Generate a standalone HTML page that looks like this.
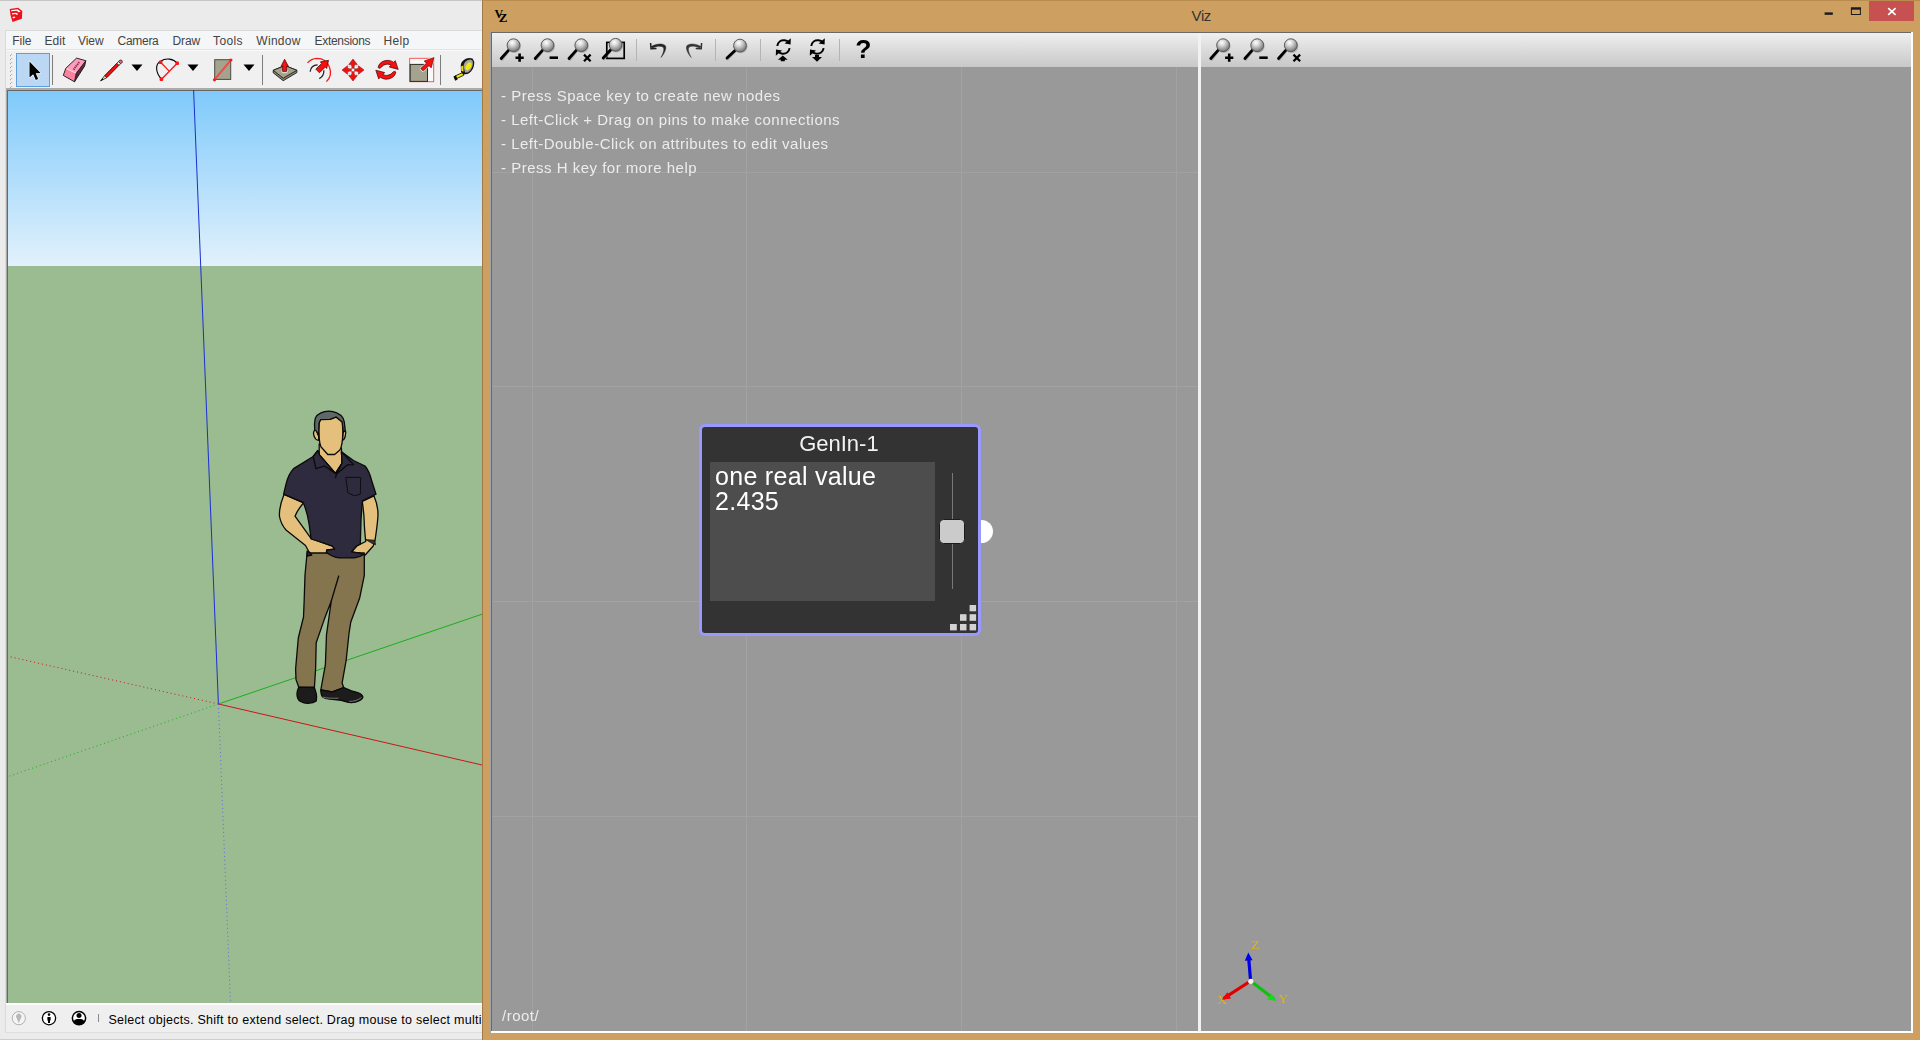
<!DOCTYPE html>
<html>
<head>
<meta charset="utf-8">
<title>Viz</title>
<style>
html,body{margin:0;padding:0;}
body{width:1920px;height:1040px;overflow:hidden;position:relative;background:#ebebeb;font-family:"Liberation Sans",sans-serif;}
.abs{position:absolute;}
/* ---------- SketchUp window ---------- */
#su{left:0;top:0;width:482px;height:1040px;background:#ebebeb;overflow:hidden;}
#su-top{left:0;top:0;width:482px;height:1px;background:#c6c6c6;}
#su-menu{left:6px;top:31px;width:476px;height:18px;background:#f5f6f7;}
#su-menu span{position:absolute;top:3px;font-size:12px;line-height:14px;color:#444;white-space:nowrap;}
#su-tool{left:6px;top:51px;width:476px;height:38px;background:#f0f0f0;}
#su-view{left:6px;top:88px;width:476px;height:915px;background:#6a6663;border-left:1px solid #ababab;border-top:2px solid #ababab;box-sizing:border-box;overflow:hidden;}
#su-client{left:5px;top:30px;width:477px;height:1003px;box-sizing:border-box;border-left:1px solid #dadada;border-top:1px solid #dadada;}
#su-msep{left:6px;top:49px;width:476px;height:2px;background:#fafafa;border-top:1px solid #e3e3e3;box-sizing:border-box;}
#su-status{left:6px;top:1003px;width:476px;height:30px;background:#efefef;box-sizing:border-box;border-top:2px solid #fdfdfd;border-bottom:1px solid #dedede;}
#su-status .txt{position:absolute;left:102.5px;top:8.3px;font-size:12.5px;line-height:14px;color:#000;white-space:nowrap;letter-spacing:0.265px;}
#su-bottom{left:0;top:1039px;width:482px;height:1px;background:#cdcdcd;}
/* ---------- Viz window ---------- */
#viz{left:482px;top:0;width:1438px;height:1040px;background:#cda062;border-left:1px solid #9f7b49;border-top:1px solid #b98c4e;box-sizing:border-box;}
#viz-title{left:708.6px;top:6px;font-size:15px;color:#33332f;letter-spacing:-0.4px;}
#viz-inner{left:490px;top:31px;width:1423px;height:1002px;background:#fdfdfd;box-sizing:border-box;border-left:1px solid #a2a4a6;border-top:1px solid #a2a4a6;}
#viz-inner2{left:491px;top:32px;width:1420px;height:999px;background:#f2f2f2;box-sizing:border-box;border-left:1px solid #696969;border-top:1px solid #696969;}
.tb{top:33px;height:34px;background:linear-gradient(#f0f0f0,#e3e3e3 30%,#c8c8c8);}
.canvas{top:67px;height:964px;background:#999;overflow:hidden;}
.gl{background:#a2a2a2;}
.help,#ntitle,#ntext,#rootlbl{will-change:transform;}
.help{position:absolute;left:9.4px;font-size:15px;line-height:17px;color:#ececec;white-space:nowrap;letter-spacing:0.5px;}
</style>
</head>
<body>
<!-- SketchUp -->
<div id="su" class="abs">
  <div id="su-top" class="abs"></div>
  <div id="su-client" class="abs"></div>
  <div id="su-menu" class="abs">
    <span style="left:6.2px;letter-spacing:0px">File</span><span style="left:38.4px;letter-spacing:0.1px">Edit</span><span style="left:72.1px;letter-spacing:-0.1px">View</span><span style="left:111.6px;letter-spacing:-0.3px">Camera</span><span style="left:166.6px;letter-spacing:-0.15px">Draw</span><span style="left:207.1px;letter-spacing:0.35px">Tools</span><span style="left:250.3px;letter-spacing:0.3px">Window</span><span style="left:308.5px;letter-spacing:-0.3px">Extensions</span><span style="left:377.5px;letter-spacing:0.35px">Help</span>
  </div>
  <div id="su-tool" class="abs"></div>
  <div id="su-msep" class="abs"></div>
<svg class="abs" style="left:6px;top:51px" width="476" height="38" viewBox="6 51 476 38">
  <!-- grip -->
  <g fill="#a6a6a6"><rect x="10" y="55" width="1.2" height="1.2"/><rect x="10" y="59" width="1.2" height="1.2"/><rect x="10" y="63" width="1.2" height="1.2"/><rect x="10" y="67" width="1.2" height="1.2"/><rect x="10" y="71" width="1.2" height="1.2"/><rect x="10" y="75" width="1.2" height="1.2"/><rect x="10" y="79" width="1.2" height="1.2"/><rect x="10" y="83" width="1.2" height="1.2"/><rect x="10" y="87" width="1.2" height="1.2"/></g>
  <g fill="#b8b8b8"><rect x="11" y="54" width="1.2" height="1.2"/><rect x="11" y="58" width="1.2" height="1.2"/><rect x="11" y="62" width="1.2" height="1.2"/><rect x="11" y="66" width="1.2" height="1.2"/><rect x="11" y="70" width="1.2" height="1.2"/><rect x="11" y="74" width="1.2" height="1.2"/><rect x="11" y="78" width="1.2" height="1.2"/><rect x="11" y="82" width="1.2" height="1.2"/><rect x="11" y="86" width="1.2" height="1.2"/></g>
  <g fill="#ffffff"><rect x="11.2" y="55.2" width="1" height="1"/><rect x="11.2" y="59.2" width="1" height="1"/><rect x="11.2" y="63.2" width="1" height="1"/><rect x="11.2" y="67.2" width="1" height="1"/><rect x="11.2" y="71.2" width="1" height="1"/><rect x="11.2" y="75.2" width="1" height="1"/><rect x="11.2" y="79.2" width="1" height="1"/><rect x="11.2" y="83.2" width="1" height="1"/><rect x="11.2" y="87.2" width="1" height="1"/></g>
  <!-- selected button -->
  <rect x="16.5" y="53.5" width="33" height="33" fill="#bcd7f3" stroke="#5b9fe0" stroke-width="1"/>
  <!-- cursor -->
  <path d="M29.5 61.5 L29.5 77.5 L33.2 74.2 L35.8 80 L38.2 78.9 L35.7 73.3 L40.6 73 Z" fill="#000" stroke="#fff" stroke-width="1.2" stroke-linejoin="round" paint-order="stroke"/>
  <!-- separators -->
  <rect x="52" y="55" width="1" height="30" fill="#7d7d7d"/>
  <rect x="262" y="55" width="1" height="30" fill="#7d7d7d"/>
  <rect x="440" y="55" width="1" height="30" fill="#7d7d7d"/>
  <!-- eraser -->
  <path d="M76.2 73.3 L85.8 60.7 L84.6 66.1 L74.5 81.8 Z" fill="#5a2a3a"/>
  <path d="M65.85 68.2 L76.6 58.1 L85.8 60.7 L76.2 73.3 Z" fill="#ff9dba"/>
  <path d="M65.85 68.2 L76.2 73.3 L74.5 81.8 L63.3 75.4 Z" fill="#f9829f"/>
  <path d="M66.4 68.6 L76 73.3" stroke="#ffe6ee" stroke-width="0.8"/>
  <path d="M65.85 68.2 L76.6 58.1 L85.8 60.7 L84.6 66.1 L74.5 81.8 L63.3 75.4 Z M76.2 73.3 L74.5 81.8 M76.2 73.3 L85.8 60.7" fill="none" stroke="#1a1216" stroke-width="0.9" stroke-linejoin="round"/>
  <path d="M73.6 69.6 L79.6 61.6" stroke="#8a3050" stroke-width="2" stroke-dasharray="1.3 0.7"/>
  <!-- pencil -->
  <g stroke-linejoin="round">
    <path d="M104.7 75.6 L116.9 63.2 L119 65.3 L106.8 77.7 Z" fill="#f01010" stroke="#2a0a0a" stroke-width="0.9"/>
    <path d="M116.9 63.2 L118.5 61.6 L120.6 63.7 L119 65.3 Z" fill="#f4f4f4" stroke="#2a2a2a" stroke-width="0.8"/>
    <path d="M118.5 61.6 C 119.2 60, 121.2 59.6, 122 60.6 C 122.8 61.6, 122.2 63.2, 120.6 63.7 Z" fill="#e06a78" stroke="#3a1a1a" stroke-width="0.8"/>
    <path d="M104.7 75.6 L106.8 77.7 L100.5 80.9 Z" fill="#e6dfa2" stroke="#1a1a10" stroke-width="0.8"/>
    <path d="M102.6 78.2 L103.3 79.5 L100.5 80.9 Z" fill="#000"/>
  </g>
  <!-- dropdown arrows -->
  <path d="M131.5 64.5 L142.5 64.5 L137 71 Z" fill="#000"/>
  <path d="M187.5 64.5 L198.5 64.5 L193 71 Z" fill="#000"/>
  <path d="M243.5 64.5 L254.5 64.5 L249 71 Z" fill="#000"/>
  <!-- arc -->
  <path d="M161.5 79.2 C 154.8 72, 155.5 63.5, 160.6 61.2 C 166 57.6, 173.5 58.6, 177.2 63.2" fill="none" stroke="#000" stroke-width="1.1"/>
  <path d="M161.5 79.2 L177.2 63.2 M168.9 70.9 L160.6 62.3" stroke="#f81818" stroke-width="1.3" fill="none"/>
  <rect x="159.6" y="77.4" width="3.6" height="3.6" rx="1" fill="#f81818"/><rect x="175.4" y="61.4" width="3.6" height="3.6" rx="1" fill="#f81818"/><rect x="158.8" y="60.5" width="3.6" height="3.6" rx="1" fill="#f81818"/>
  <!-- rectangle -->
  <rect x="214.7" y="59.7" width="16" height="19.7" fill="#a5a38d" stroke="#4c4b3e" stroke-width="1"/>
  <path d="M214.5 79.8 L230.9 60" stroke="#f81818" stroke-width="1.5"/>
  <path d="M214.5 79.8 L230.9 60" stroke="#ffc8c8" stroke-width="0.4"/>
  <circle cx="214.5" cy="79.8" r="1.6" fill="#f81818"/><circle cx="230.9" cy="60" r="1.6" fill="#f81818"/>
  <!-- push/pull -->
  <g stroke="#1c1c16" stroke-width="0.9" stroke-linejoin="round">
    <path d="M273.2 70.3 L284.9 65.6 L296.9 70.3 L296.9 72.6 L283.2 80.7 L273.2 72.8 Z" fill="#87866f"/>
    <path d="M273.2 70.3 L284.9 65.6 L296.9 70.3 L283.2 78.2 Z" fill="#a5a38d"/>
  </g>
  <ellipse cx="284.6" cy="71.4" rx="3.4" ry="1.8" fill="#d8d8cc"/>
  <path d="M282.6 71.4 L282.6 66.3 L281 66.3 L284.6 59.2 L288.4 66.3 L286.6 66.3 L286.6 71.4 Z" fill="#f81010" stroke="#4a0808" stroke-width="0.7" stroke-linejoin="round"/>
  <!-- follow me -->
  <path d="M307.5 62.9 A13.6 13.6 0 0 1 317 58.4 A13.6 13.6 0 0 1 326.4 81.6" fill="none" stroke="#f81818" stroke-width="1.3"/>
  <path d="M310.1 71.8 C 310.6 67.5, 313.5 65, 317.6 64.9 M319.3 78.6 C 322.5 77, 324 74, 323.9 70.3" fill="none" stroke="#1a1a1a" stroke-width="1.2"/>
  <path d="M328.5 60.3 L326.7 68.5 L325.3 67.1 L319.4 72.8 L315.8 69.1 L321.7 63.4 L320.3 61.9 Z" fill="#f81010" stroke="#2a0606" stroke-width="0.7" stroke-linejoin="round"/>
  <!-- move -->
  <g fill="#f01010" stroke="#8a0a0a" stroke-width="0.5">
    <path d="M353 59 L357.3 64.5 L354.5 64.5 L354.5 68.5 L358.5 68.5 L358.5 65.7 L364 70 L358.5 74.3 L358.5 71.5 L354.5 71.5 L354.5 75.5 L357.3 75.5 L353 81 L348.7 75.5 L351.5 75.5 L351.5 71.5 L347.5 71.5 L347.5 74.3 L342 70 L347.5 65.7 L347.5 68.5 L351.5 68.5 L351.5 64.5 L348.7 64.5 Z"/>
  </g>
  <g fill="#fff" stroke="#999" stroke-width="0.4"><rect x="349" y="66" width="2.4" height="2.4"/><rect x="354.6" y="66" width="2.4" height="2.4"/><rect x="349" y="71.6" width="2.4" height="2.4"/><rect x="354.6" y="71.6" width="2.4" height="2.4"/><rect x="351.8" y="68.8" width="2.4" height="2.4"/></g>
  <!-- rotate -->
  <g fill="#f81010" stroke="#3a0606" stroke-width="0.7" stroke-linejoin="round">
    <path d="M378.2 67.6 C 378.6 63.2, 383.5 60, 388.5 60.4 C 390.6 60.6, 392.3 61.3, 393.6 62.3 L395.3 60.7 L398.2 69.4 L389.3 67 L391 65.2 C 388.6 63.6, 384 63.8, 381.6 67 C 380.6 68.4, 378.4 68.6, 378.2 67.6 Z"/>
    <path d="M395.8 72 C 395.4 76.4, 390.5 79.6, 385.5 79.2 C 383.4 79, 381.7 78.3, 380.4 77.3 L378.7 78.9 L375.8 70.2 L384.7 72.6 L383 74.4 C 385.4 76, 390 75.8, 392.4 72.6 C 393.4 71.2, 395.6 71, 395.8 72 Z"/>
  </g>
  <!-- scale -->
  <rect x="409.7" y="58.3" width="24" height="23.4" fill="#fafafa" stroke="#f84848" stroke-width="0.9"/>
  <rect x="410.2" y="64.4" width="17.3" height="17" fill="#a5a38d" stroke="#2c2c24" stroke-width="1"/>
  <path d="M420.6 68.6 L426.4 63.3 L424.2 61 L434.1 57.6 L431.2 67.9 L429 65.7 L423.2 71.1 Z" fill="#f81010" stroke="#fff" stroke-width="1.6" stroke-linejoin="round"/>
  <path d="M420.6 68.6 L426.4 63.3 L424.2 61 L434.1 57.6 L431.2 67.9 L429 65.7 L423.2 71.1 Z" fill="#f81010" stroke="#3a0606" stroke-width="0.6" stroke-linejoin="round"/>
  <!-- tape measure -->
  <g stroke-linejoin="round">
    <path d="M455 76 L462.6 72.6 L463.8 75.2 L456.2 78.8 Z" fill="#f6ea00" stroke="#141400" stroke-width="0.9"/>
    <path d="M453.4 76.4 L456 75.4 L457.6 79.6 L455.2 80.8 Z" fill="#0a0a0a"/>
    <path d="M460.8 66 C 460.6 62, 464 58.4, 469.5 58 L472.5 58.6 L474.2 61.6 C 474.6 66.5, 472.5 71.6, 467.6 74 L463.4 74.4 L461 72 Z" fill="#141414"/>
    <path d="M463.6 66.6 C 463.6 62.6, 466.6 59.6, 470.6 59.6 L472.6 60.8 C 473.6 65.5, 471.6 70.4, 467.6 72.6 L465 72.4 Z" fill="#a4a4a4"/>
    <path d="M461 66.4 L463.2 65.6 L463.6 71.6 L461.4 71 Z" fill="#e8dc00"/>
    <ellipse cx="468.5" cy="66.2" rx="2.5" ry="4.3" transform="rotate(28 468.5 66.2)" fill="#f6ea00"/>
  </g>
</svg>
  <div id="su-view" class="abs"></div>
<svg class="abs" style="left:8px;top:90px" width="474" height="913" viewBox="8 90 474 913">
  <defs><linearGradient id="sky" x1="0" y1="0" x2="0" y2="1"><stop offset="0" stop-color="#7fcafb"/><stop offset="1" stop-color="#e2f1fc"/></linearGradient></defs>
  <rect x="8" y="91" width="474" height="175" fill="url(#sky)"/>
  <rect x="8" y="90" width="474" height="1" fill="#6a6663"/>
  <rect x="8" y="266" width="474" height="737" fill="#9bbb91"/>
  <!-- axes -->
  <path d="M193.6 90 L218.4 704" stroke="#1b2fd0" stroke-width="1" fill="none"/>
  <path d="M218.4 704 L482 614.2" stroke="#18b018" stroke-width="1" fill="none"/>
  <path d="M218.4 704 L482 765" stroke="#c81818" stroke-width="1" fill="none"/>
  <path d="M218.4 704 L8 656.3" stroke="#c81818" stroke-width="1" stroke-dasharray="1 3" fill="none"/>
  <path d="M218.4 704 L8 776.6" stroke="#18b018" stroke-width="1" stroke-dasharray="1 3" fill="none"/>
  <path d="M218.4 704 L230.5 1003" stroke="#4a5cc8" stroke-width="1" stroke-dasharray="1 3" fill="none" opacity="0.75"/>
  <!-- man -->
  <g stroke="#0a0a0a" stroke-width="1.3" stroke-linejoin="round" stroke-linecap="round">
    <!-- left arm (viewer left) -->
    <path d="M284 494.5 C 281 502, 279 510, 279.5 516.5 C 280.5 522, 283 526.5, 286 530 L 305.5 545.5 L 309 552 L 311.8 555.2 L 326 553.8 L 326.8 550 L 334.7 549.1 L 332.5 546.2 L 319 541.5 L 311 538.3 L 295 516.2 C 297 511, 300 507, 303.5 503 Z" fill="#e4c07c"/>
    <!-- right arm -->
    <path d="M374 496 C 377 503, 378.5 511, 377.8 518 C 377.2 526, 376 534, 375 540.5 L 373.2 546 L 365 555.2 L 359.6 553.2 L 351.5 551.8 L 356.9 545.8 L 365.7 541.5 C 365 534, 364.3 528, 364.2 521 C 364 514, 363.2 508, 362.3 501.5 Z" fill="#e4c07c"/>
    <!-- pants -->
    <path d="M307.1 553 L 305 575 L 304.2 600 L 303.5 617 L 298.3 638 L 295.6 669 L 296 679.6 L 298.8 687.3 L 314.4 687.5 L 315.6 669 L 316.2 642.7 L 324.2 619.6 L 331.3 601 L 326.5 634.6 L 325.4 664.6 L 320.8 690 L 332.3 691.8 L 343.8 687.7 L 342.1 683.1 L 346.2 660 L 349 633.5 L 350.8 621.9 L 359.6 598.3 L 364.3 575.4 L 364.3 553 Z" fill="#85754f"/>
    <path d="M338.7 576 L 331.3 601" fill="none"/>
    <!-- shoes -->
    <path d="M298.8 687.1 C 297.6 690, 296.6 693.5, 297.1 695.8 C 297.6 698.6, 299 700.6, 300.6 701.5 C 303 702.8, 305.5 703.4, 308.1 703.3 C 311 703.2, 314.4 702.4, 316.2 701 C 316.8 698.5, 316.8 696, 316.2 693.5 L 314.4 687.5 Z" fill="#1c1c1c"/>
    <path d="M320.8 690 C 320.8 692.6, 321.2 695.4, 322.5 696.9 C 324.5 698.4, 327 698.9, 330 699.2 L 341.5 700.4 C 344.6 701.4, 347.6 702.6, 350.8 702.7 C 353.6 702.8, 356.6 702.2, 358.8 701 C 360.8 700, 362.6 698.6, 362.9 696.9 C 362.6 695.4, 361.4 694.2, 360 693.5 C 357 692.2, 353.8 691.6, 350.8 690.6 L 343.8 687.7 L 332.3 691.8 Z" fill="#1c1c1c"/><path d="M323 697.2 C 327 698.4, 332 698.3, 338 698.2 M349.6 701.4 C 354 701.6, 358.5 700, 361.2 697.8" fill="none" stroke="#8a8a8a" stroke-width="0.8"/>
    <!-- neck -->
    <path d="M319.2 444 L 319.2 455 L 335.4 473.4 L 342.1 463 L 341.4 448 Z" fill="#e4c07c"/>
    <!-- shirt -->
    <path d="M313.2 456.5 L 293.6 468.6 C 289.5 473, 287.5 478, 286.2 483.4 L 283.6 494.2 L 303.1 502.3 C 305.5 508, 307.5 513, 309.1 524.2 L 311.1 539 L 319 541.5 L 332.5 546.2 L 334.7 549.1 L 326.8 550 L 326.6 552.5 C 331 556, 335 557.5, 339.4 557.9 L 354.2 557.9 C 358 557.5, 361 556.5, 363.6 554.5 L 359.6 553.2 L 351.5 551.8 L 356.9 545.8 L 360.3 544 L 361 520 L 362.3 500.9 L 376 494.2 L 371.7 480.8 C 370 474, 368 469.5, 365 466 L 353.5 460.5 L 341.4 451.8 L 342.1 463 L 335.4 473.4 L 319.2 455 L 317.9 450.5 Z" fill="#2f2b3e"/>
    <path d="M307.1 551 L 307.1 556 L 311.8 555.2 L 309 552 Z" fill="#2f2b3e"/>
    <!-- collar -->
    <path d="M317.9 450.5 L 313.2 456.5 L 315.9 468.6 L 324.6 466 L 335.4 473.4 L 319.6 455 Z" fill="#2f2b3e"/>
    <path d="M341.4 451.8 L 353.5 464.6 L 347.5 464.8 L 336.5 474 L 342.1 463 Z" fill="#2f2b3e"/><path d="M336.5 474 L 335.6 477.5" fill="none"/>
    <!-- pocket -->
    <path d="M346.1 477.4 L 360.7 477.4 L 360.3 494.2 L 354.2 495.8 L 348.2 492.9 Z" fill="#2f2b3e" stroke-width="0.9"/>
    <!-- watch -->
    <path d="M366.3 539.7 L 374.5 540.2 L 375.6 544.6 L 372.5 543.5 Z" fill="#333" stroke-width="0.8"/>
    <!-- head -->
    <path d="M316.2 430 C 314.6 429.6, 313.4 431.5, 313.5 433.6 C 313.8 436, 314.6 437.8, 315.6 438.9 C 316.6 439.9, 317.8 440.4, 318.8 440.4 L 318.6 435 Z" fill="#e4c07c"/>
    <path d="M343.2 431 C 345 429.8, 346 431, 345.7 433 C 345.5 435.5, 345 437.5, 344.2 438.9 L 342.4 440.5 Z" fill="#e4c07c"/>
    <path d="M314.8 430.5 C 314.2 425, 314.6 421, 315.3 418.2 C 316.5 415.5, 318.5 414, 320.9 412.9 C 323.5 411.6, 326 411.1, 328.8 411.1 C 331.6 411.1, 334.4 411.8, 336.7 412.9 C 339.6 414.2, 341.8 415.8, 343.1 418.2 C 344.3 420.6, 344.6 423.5, 344.7 426.2 L 345.2 430.2 L 343.2 432.5 L 342 421.9 L 336.2 417.2 L 330.4 419.3 L 320.9 419.6 L 319.3 422.5 L 319 431.5 L 318.2 435.2 L 316.4 431 Z" fill="#5e6868"/>
    <path d="M319.3 422.5 L 320.9 419.6 L 330.4 419.3 L 336.2 417.2 L 342 421.9 C 342.6 425, 342.8 428, 342.8 431.5 C 342.8 435.5, 342.6 439.5, 342 443.1 C 341.6 445.8, 341 448, 339.9 450 L 334.6 454.5 L 327.8 454.5 L 320.9 446.8 C 320 444.4, 319.5 442, 319.3 439.4 L 319 431.5 Z" fill="#e4c07c"/>
  </g>
</svg>
  <div id="su-status" class="abs"><div class="txt">Select objects. Shift to extend select. Drag mouse to select multiple.</div></div>
  <div id="su-bottom" class="abs"></div>
  <svg class="abs" style="left:6px;top:1003px" width="100" height="29" viewBox="6 1003 100 29">
    <circle cx="18.8" cy="1018.2" r="6.6" fill="#f4f4f4" stroke="#b0b0b0" stroke-width="1"/>
    <path d="M18.8 1023 L16.6 1018 A2.7 2.7 0 1 1 21 1018 Z" fill="#b8b8b8"/>
    <circle cx="49" cy="1018.2" r="6.6" fill="#fff" stroke="#000" stroke-width="1.3"/>
    <circle cx="49" cy="1014.6" r="1.3" fill="#000"/><path d="M47.4 1017 H50.6 V1020.5 H50 V1023 H48 V1020.5 H47.4 Z" fill="#000"/>
    <circle cx="79" cy="1018.2" r="6.6" fill="#fff" stroke="#000" stroke-width="1.5"/>
    <circle cx="79" cy="1015.4" r="2.5" fill="#000"/><path d="M73.9 1022 C 74 1019.3, 76.5 1019.1, 79 1019.1 C 81.5 1019.1, 84 1019.3, 84.1 1022 A6.6 6.6 0 0 1 73.9 1022 Z" fill="#000"/>
    <rect x="98" y="1014" width="1" height="8" fill="#8a8a8a"/>
  </svg>
  <svg class="abs" style="left:8px;top:6px" width="17" height="18" viewBox="8 6 17 18">
    <path d="M9.7 9 L18.1 7.8 L22.3 10.9 L21.9 18.75 L12.5 21.9 L10.6 15.6 Z" fill="#e9131c"/>
    <path d="M10.9 10.2 L17.5 9.3 L20.7 11.5 L18.75 12.3 L16.6 10.7 L11.3 11.3 Z" fill="#fff"/>
    <path d="M11.9 13.3 L16.25 12.7 L18.2 14.1 L16.9 14.9 L15.3 13.9 L12.3 14.5 Z" fill="#fff"/>
    <path d="M12.5 16.9 L14.7 16.5 L15.4 17.5 L13.1 18.4 Z" fill="#fff"/>
  </svg>

</div>
<!-- Viz -->
<div id="viz" class="abs">
  <div id="viz-title" class="abs">Viz</div>
  <div class="abs" style="left:1386px;top:0;width:45px;height:20px;background:#c75050;"></div>
  <svg class="abs" style="left:1329px;top:-0.8px" width="108" height="24" viewBox="1812 0 108 24">
    <rect x="1824.6" y="12.4" width="8.2" height="2.4" fill="#1a1a1a"/>
    <rect x="1851.4" y="8" width="9" height="6.5" fill="none" stroke="#1a1a1a" stroke-width="1"/>
    <rect x="1851" y="7.5" width="10" height="2.2" fill="#1a1a1a"/>
    <path d="M1888.2 8.2 L1895.6 14.8 M1895.6 8.2 L1888.2 14.8" stroke="#fff" stroke-width="1.7"/>
  </svg>
  <svg class="abs" id="vzicon" style="left:8px;top:4px" width="24" height="22" viewBox="490 4 24 22"><g font-family="Liberation Serif, serif" font-weight="bold" fill="#000"><text x="493.6" y="17.3" font-size="12">V</text><text x="497.8" y="21" font-size="13">Z</text></g></svg>

</div>
<div id="viz-inner" class="abs"></div>
<div id="viz-inner2" class="abs"></div>
<div class="abs tb" style="left:492px;width:706px;"></div>
<div class="abs tb" style="left:1201px;width:710px;"></div>
<svg class="abs" style="left:491px;top:33px;will-change:transform" width="707" height="34" viewBox="491 33 707 34">
<defs><radialGradient id="glass" cx="0.4" cy="0.3" r="0.75"><stop offset="0" stop-color="#ffffff"/><stop offset="0.3" stop-color="#dcdcdc"/><stop offset="0.7" stop-color="#9c9c9c"/><stop offset="1" stop-color="#6a6a6a"/></radialGradient></defs>
<g>
    <path d="M508.9 50.400000000000006 L502.0 59.3" stroke="#8a8a8a" stroke-width="3" stroke-linecap="round" opacity="0.55"/>
    <path d="M509.1 49.6 L501.2 58.5" stroke="#000" stroke-width="2.8" stroke-linecap="round"/>
    <circle cx="514.1" cy="46.0" r="6.9" fill="#777" opacity="0.45"/>
    <circle cx="513.5" cy="45.2" r="6.4" fill="url(#glass)" stroke="#5a5a5a" stroke-width="1"/>
    </g>
<path d="M515.5 57.7 H523.7 M519.6 53.6 V61.8" stroke="#000" stroke-width="2.6"/>
<g>
    <path d="M542.9 50.400000000000006 L536.0 59.3" stroke="#8a8a8a" stroke-width="3" stroke-linecap="round" opacity="0.55"/>
    <path d="M543.1 49.6 L535.2 58.5" stroke="#000" stroke-width="2.8" stroke-linecap="round"/>
    <circle cx="548.1" cy="46.0" r="6.9" fill="#777" opacity="0.45"/>
    <circle cx="547.5" cy="45.2" r="6.4" fill="url(#glass)" stroke="#5a5a5a" stroke-width="1"/>
    </g>
<path d="M549.6 57.7 H558" stroke="#000" stroke-width="2.6"/>
<g>
    <path d="M576.6999999999999 50.400000000000006 L569.8 59.3" stroke="#8a8a8a" stroke-width="3" stroke-linecap="round" opacity="0.55"/>
    <path d="M576.9 49.6 L569.0 58.5" stroke="#000" stroke-width="2.8" stroke-linecap="round"/>
    <circle cx="581.9" cy="46.0" r="6.9" fill="#777" opacity="0.45"/>
    <circle cx="581.3" cy="45.2" r="6.4" fill="url(#glass)" stroke="#5a5a5a" stroke-width="1"/>
    </g>
<path d="M584 54.6 L590.6 61.2 M590.6 54.6 L584 61.2" stroke="#000" stroke-width="2.2"/>
<rect x="606.8" y="42.4" width="17.4" height="16" fill="none" stroke="#000" stroke-width="1.7"/>
<g>
    <path d="M611.0 50.0 L604.0 58.8" stroke="#8a8a8a" stroke-width="3" stroke-linecap="round" opacity="0.55"/>
    <path d="M611.2 49.199999999999996 L603.2 58" stroke="#000" stroke-width="2.8" stroke-linecap="round"/>
    <circle cx="616.2" cy="45.599999999999994" r="6.9" fill="#777" opacity="0.45"/>
    <circle cx="615.6" cy="44.8" r="6.4" fill="url(#glass)" stroke="#5a5a5a" stroke-width="1"/>
    </g>
<rect x="636" y="39" width="1" height="22" fill="#b4b4b4"/>
<rect x="715" y="39" width="1" height="22" fill="#b4b4b4"/>
<rect x="760" y="39" width="1" height="22" fill="#b4b4b4"/>
<rect x="839" y="39" width="1" height="22" fill="#b4b4b4"/>
<!-- undo -->
<path d="M651.2 46.6 C 656 43.6, 662.5 43.2, 665.2 45.6 C 667 48, 664.5 53.5, 661 57.5 C 664 52, 664.5 48.5, 663 47 C 661 45.6, 656 46, 652.5 48 Z" fill="#222" stroke="#222" stroke-width="0.5"/>
<path d="M650.6 43 L651 48.6 L656.5 48.4" fill="none" stroke="#222" stroke-width="1.5"/>
<!-- redo -->
<path d="M701 46.6 C 696.2 43.6, 689.7 43.2, 687 45.6 C 685.2 48, 687.7 53.5, 691.2 57.5 C 688.2 52, 687.7 48.5, 689.2 47 C 691.2 45.6, 696.2 46, 699.7 48 Z" fill="#333" stroke="#333" stroke-width="0.5"/>
<path d="M701.6 43 L701.2 48.6 L695.7 48.4" fill="none" stroke="#333" stroke-width="1.5"/>
<g>
    <path d="M735.4 50.800000000000004 L727.8 58.8" stroke="#8a8a8a" stroke-width="3" stroke-linecap="round" opacity="0.55"/>
    <path d="M735.6 50.0 L727 58" stroke="#000" stroke-width="2.8" stroke-linecap="round"/>
    <circle cx="740.6" cy="46.4" r="6.9" fill="#777" opacity="0.45"/>
    <circle cx="740" cy="45.6" r="6.4" fill="url(#glass)" stroke="#5a5a5a" stroke-width="1"/>
    </g>
<g transform="translate(0,-1.2)">
<!-- refresh up -->
<g id="refr" fill="none" stroke="#000" stroke-width="2">
 <path d="M777.3 47.2 C 777.8 43.2, 781 41.2, 784.5 41.5 C 786.5 41.7, 788 42.6, 789 43.8"/>
 <path d="M789.6 49.3 C 789 53.2, 785.8 55.2, 782.3 54.9 C 780.3 54.7, 778.8 53.8, 777.8 52.6"/>
</g>
<path d="M790.8 39.4 L790.6 45.6 L784.6 44.6 Z" fill="#000"/>
<path d="M775.8 57 L776 50.8 L782 51.8 Z" fill="#000"/>
<path d="M782.8 56.8 L787.7 61 L784.8 61 L784.8 62.5 L780.8 62.5 L780.8 61 L777.9 61 Z" fill="#000"/>
<!-- refresh down -->
<g fill="none" stroke="#000" stroke-width="2">
 <path d="M811.3 47.2 C 811.8 43.2, 815 41.2, 818.5 41.5 C 820.5 41.7, 822 42.6, 823 43.8"/>
 <path d="M823.6 49.3 C 823 53.2, 819.8 55.2, 816.3 54.9 C 814.3 54.7, 812.8 53.8, 811.8 52.6"/>
</g>
<path d="M824.8 39.4 L824.6 45.6 L818.6 44.6 Z" fill="#000"/>
<path d="M809.8 57 L810 50.8 L816 51.8 Z" fill="#000"/>
<path d="M817 62.9 L822 58.2 L819 58.2 L819 56.2 L815 56.2 L815 58.2 L812 58.2 Z" fill="#000"/>
</g>
<text x="855.2" y="58.3" font-family="Liberation Sans, sans-serif" font-weight="bold" font-size="26.5" fill="#000">?</text>
</svg>
<svg class="abs" style="left:1201px;top:33px" width="710" height="34" viewBox="1201 33 710 34">
<g>
    <path d="M1218.5 50.400000000000006 L1211.6 59.3" stroke="#8a8a8a" stroke-width="3" stroke-linecap="round" opacity="0.55"/>
    <path d="M1218.6999999999998 49.6 L1210.8 58.5" stroke="#000" stroke-width="2.8" stroke-linecap="round"/>
    <circle cx="1223.6999999999998" cy="46.0" r="6.9" fill="#777" opacity="0.45"/>
    <circle cx="1223.1" cy="45.2" r="6.4" fill="url(#glass)" stroke="#5a5a5a" stroke-width="1"/>
    </g>
<path d="M1225.1 57.7 H1233.3 M1229.2 53.6 V61.8" stroke="#000" stroke-width="2.6"/>
<g>
    <path d="M1252.6000000000001 50.400000000000006 L1245.7 59.3" stroke="#8a8a8a" stroke-width="3" stroke-linecap="round" opacity="0.55"/>
    <path d="M1252.8 49.6 L1244.9 58.5" stroke="#000" stroke-width="2.8" stroke-linecap="round"/>
    <circle cx="1257.8" cy="46.0" r="6.9" fill="#777" opacity="0.45"/>
    <circle cx="1257.2" cy="45.2" r="6.4" fill="url(#glass)" stroke="#5a5a5a" stroke-width="1"/>
    </g>
<path d="M1259.3 57.7 H1267.7" stroke="#000" stroke-width="2.6"/>
<g>
    <path d="M1286.2 50.400000000000006 L1279.3 59.3" stroke="#8a8a8a" stroke-width="3" stroke-linecap="round" opacity="0.55"/>
    <path d="M1286.3999999999999 49.6 L1278.5 58.5" stroke="#000" stroke-width="2.8" stroke-linecap="round"/>
    <circle cx="1291.3999999999999" cy="46.0" r="6.9" fill="#777" opacity="0.45"/>
    <circle cx="1290.8" cy="45.2" r="6.4" fill="url(#glass)" stroke="#5a5a5a" stroke-width="1"/>
    </g>
<path d="M1293.5 54.6 L1300.1 61.2 M1300.1 54.6 L1293.5 61.2" stroke="#000" stroke-width="2.2"/>
</svg>
<div class="abs canvas" id="cv1" style="left:492px;width:706px;">
  <div class="abs gl" style="left:39.5px;top:0;width:1px;height:964px;"></div>
  <div class="abs gl" style="left:254px;top:0;width:1px;height:964px;"></div>
  <div class="abs gl" style="left:469px;top:0;width:1px;height:964px;"></div>
  <div class="abs gl" style="left:684px;top:0;width:1px;height:964px;"></div>
  <div class="abs gl" style="left:0;top:104.5px;width:706px;height:1px;"></div>
  <div class="abs gl" style="left:0;top:319px;width:706px;height:1px;"></div>
  <div class="abs gl" style="left:0;top:534px;width:706px;height:1px;"></div>
  <div class="abs gl" style="left:0;top:748.5px;width:706px;height:1px;"></div>

  <div class="help" style="top:20px">- Press Space key to create new nodes</div>
  <div class="help" style="top:44px">- Left-Click + Drag on pins to make connections</div>
  <div class="help" style="top:68px">- Left-Double-Click on attributes to edit values</div>
  <div class="help" style="top:92px">- Press H key for more help</div>

  <div class="abs" id="pin" style="left:477.5px;top:453px;width:23px;height:23px;border-radius:50%;background:#fff;"></div>
  <div class="abs" id="node" style="left:207px;top:356.5px;width:282px;height:212px;box-sizing:border-box;border:3.3px solid #9999ff;border-radius:6px;background:#333;">
    <div class="abs" id="ntitle" style="left:0;top:4.2px;width:273.8px;text-align:center;font-size:22px;color:#f2f2f2;line-height:25px;">GenIn-1</div>
    <div class="abs" id="nbox" style="left:8.2px;top:35.2px;width:224.4px;height:139.2px;background:#4d4d4d;">
      <div class="abs" id="ntext" style="left:4.4px;top:2.8px;font-size:25px;line-height:25px;color:#fff;white-space:nowrap;letter-spacing:0.3px;">one real value<br>2.435</div>
    </div>
    <div class="abs" style="left:249.8px;top:46.2px;width:1.3px;height:116.7px;background:#787878;"></div>
    <div class="abs" style="left:237.2px;top:92px;width:25.4px;height:25.4px;box-sizing:border-box;border:1px solid #1c1c1c;border-radius:4.5px;background:#cbcbcb;"></div>
    <svg class="abs" style="left:246.7px;top:177.2px" width="30" height="30" viewBox="0 0 30 30"><g fill="#d2d2d2"><rect x="20.6" y="1" width="6.5" height="6.3"/><rect x="11" y="10.2" width="6.5" height="6.6"/><rect x="20.6" y="10.2" width="6.5" height="6.6"/><rect x="1" y="20" width="6.8" height="6.4"/><rect x="11" y="20" width="6.5" height="6.4"/><rect x="20.6" y="20" width="6.5" height="6.4"/></g></svg>
  </div>
  <div class="abs" id="rootlbl" style="left:10px;top:940px;font-size:15px;line-height:17px;color:#ececec;letter-spacing:0.5px;">/root/</div>
</div>
<div class="abs canvas" id="cv2" style="left:1201px;width:710px;">
  <svg class="abs" style="left:0;top:853px;will-change:transform" width="120" height="111" viewBox="1201 920 120 111">
    <g font-family="Liberation Serif, serif" font-size="13.5" fill="#e2b21c">
      <text x="1251.2" y="948.8">Z</text><text x="1217.2" y="1003.6">X</text><text x="1278.6" y="1003">Y</text>
    </g>
    <path d="M1250.6 981 L1224.5 997.8" stroke="#e00000" stroke-width="3.2" stroke-linecap="round"/>
    <path d="M1221.8 999.8 L1227.4 992.2 L1231 998.4 Z" fill="#f00000"/>
    <path d="M1250.6 981 L1273.5 998.5" stroke="#10c010" stroke-width="3.2" stroke-linecap="round"/>
    <path d="M1276.6 1000.9 L1267.2 999.6 L1271.2 993.6 Z" fill="#18d818"/>
    <path d="M1250.6 981 L1248.6 957" stroke="#0000e0" stroke-width="3.2" stroke-linecap="round"/>
    <path d="M1248.3 952.6 L1252.6 960.2 L1244.8 960.8 Z" fill="#0000f0"/>
    <circle cx="1250.8" cy="981.3" r="2.6" fill="#f4f4f4"/>
    
  </svg>
</div>
</body>
</html>
